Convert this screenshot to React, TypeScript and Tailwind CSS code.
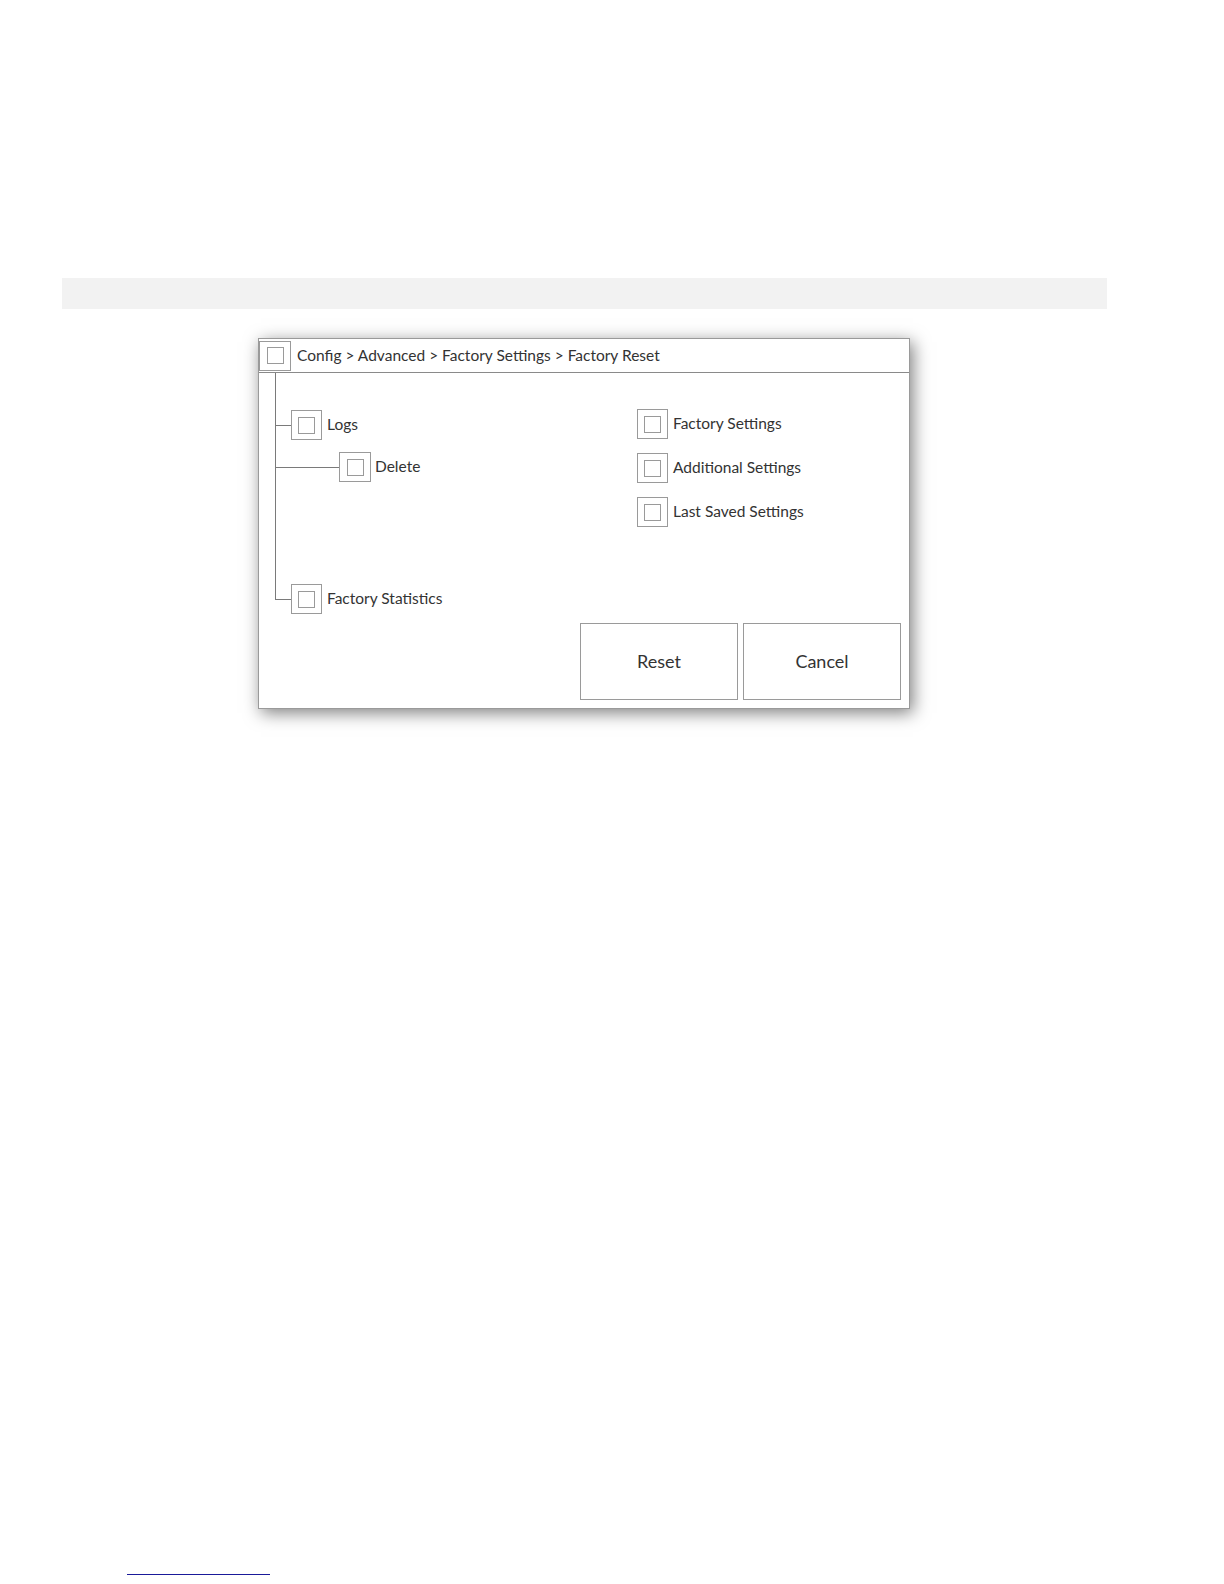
import React from 'react';

const font = { fontFamily: 'Lato, "Open Sans", sans-serif' };

const Box = ({ wide = false }: { wide?: boolean }) => (
  <div
    className={`${wide ? 'w-[32px]' : 'w-[31px]'} h-[30px] shrink-0 border border-[#9a9a9a] bg-white flex items-center justify-center`}
  >
    <div className="w-[17px] h-[17px] border border-[#9a9a9a]" />
  </div>
);

const Option = ({ label }: { label: string }) => (
  <div className="flex items-center h-[30px]">
    <Box />
    <span className="ml-[5px] text-[15.5px] text-[#333]">{label}</span>
  </div>
);

const App = () => {
  return (
    <div className="w-[1224px] h-[1584px] bg-white overflow-hidden flex flex-col" style={font}>
      {/* Top grey strip */}
      <div className="mt-[278px] ml-[62px] w-[1045px] h-[31px] bg-[#f2f2f2]" />

      {/* Dialog */}
      <div className="mt-[29px] ml-[258px] w-[652px] h-[371px] bg-white border border-[#9a9a9a] shadow-[3px_4px_16px_rgba(0,0,0,0.5)] flex flex-col">
        {/* Breadcrumb header */}
        <div className="h-[34px] border-b border-[#8a8a8a] flex items-center">
          <Box wide />
          <span className="ml-[6px] text-[15.5px] text-[#333]">
            Config &gt; Advanced &gt; Factory Settings &gt; Factory Reset
          </span>
        </div>

        {/* Body */}
        <div className="flex-1 flex flex-col">
          <div className="flex">
            {/* Tree */}
            <div className="w-[378px] shrink-0">
              <div className="ml-[16px] border-l border-[#7a7a7a] pt-[37px] pb-[102px]">
                <div className="flex items-center h-[30px]">
                  <div className="w-[15px] h-px bg-[#7a7a7a]" />
                  <Box />
                  <span className="ml-[5px] text-[15.5px] text-[#333]">Logs</span>
                </div>
                <div className="flex items-center h-[30px] mt-[12px]">
                  <div className="w-[63px] h-px bg-[#7a7a7a]" />
                  <Box wide />
                  <span className="ml-[4px] text-[15.5px] text-[#333]">Delete</span>
                </div>
              </div>
              <div className="ml-[16px] flex items-start">
                <div className="w-[16px] h-[16px] border-l border-b border-[#7a7a7a]" />
                <Option label="Factory Statistics" />
              </div>
            </div>

            {/* Right options */}
            <div className="flex-1 pt-[36px] flex flex-col gap-[14px]">
              <Option label="Factory Settings" />
              <Option label="Additional Settings" />
              <Option label="Last Saved Settings" />
            </div>
          </div>

          {/* Buttons */}
          <div className="mt-[9px] pr-[8px] flex justify-end gap-[5px]">
            <button className="w-[158px] h-[77px] border border-[#9a9a9a] bg-white text-[18px] text-[#333]">
              Reset
            </button>
            <button className="w-[158px] h-[77px] border border-[#9a9a9a] bg-white text-[18px] text-[#333]">
              Cancel
            </button>
          </div>
        </div>
      </div>

      {/* Footnote rule */}
      <div className="mt-[865px] ml-[127px] w-[143px] h-px bg-[#1a1a9a]" />
    </div>
  );
};

export default App;
